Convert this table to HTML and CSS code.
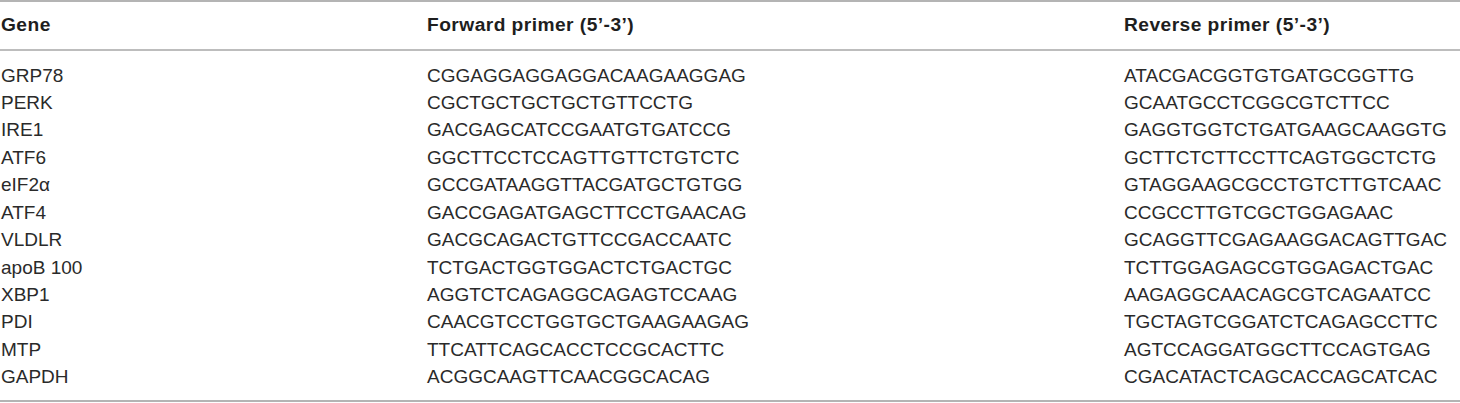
FILE: index.html
```html
<!DOCTYPE html>
<html>
<head>
<meta charset="utf-8">
<link rel="stylesheet" href="styles.css">
</head>
<body>
<div class="table">
  <div class="head row">
    <div class="c1">Gene</div>
    <div class="c2">Forward primer (5’-3’)</div>
    <div class="c3">Reverse primer (5’-3’)</div>
  </div>
  <div class="body">
    <div class="row"><div class="c1">GRP78</div><div class="c2">CGGAGGAGGAGGACAAGAAGGAG</div><div class="c3">ATACGACGGTGTGATGCGGTTG</div></div>
    <div class="row"><div class="c1">PERK</div><div class="c2">CGCTGCTGCTGCTGTTCCTG</div><div class="c3">GCAATGCCTCGGCGTCTTCC</div></div>
    <div class="row"><div class="c1">IRE1</div><div class="c2">GACGAGCATCCGAATGTGATCCG</div><div class="c3">GAGGTGGTCTGATGAAGCAAGGTG</div></div>
    <div class="row"><div class="c1">ATF6</div><div class="c2">GGCTTCCTCCAGTTGTTCTGTCTC</div><div class="c3">GCTTCTCTTCCTTCAGTGGCTCTG</div></div>
    <div class="row"><div class="c1">eIF2α</div><div class="c2">GCCGATAAGGTTACGATGCTGTGG</div><div class="c3">GTAGGAAGCGCCTGTCTTGTCAAC</div></div>
    <div class="row"><div class="c1">ATF4</div><div class="c2">GACCGAGATGAGCTTCCTGAACAG</div><div class="c3">CCGCCTTGTCGCTGGAGAAC</div></div>
    <div class="row"><div class="c1">VLDLR</div><div class="c2">GACGCAGACTGTTCCGACCAATC</div><div class="c3">GCAGGTTCGAGAAGGACAGTTGAC</div></div>
    <div class="row"><div class="c1">apoB 100</div><div class="c2">TCTGACTGGTGGACTCTGACTGC</div><div class="c3">TCTTGGAGAGCGTGGAGACTGAC</div></div>
    <div class="row"><div class="c1">XBP1</div><div class="c2">AGGTCTCAGAGGCAGAGTCCAAG</div><div class="c3">AAGAGGCAACAGCGTCAGAATCC</div></div>
    <div class="row"><div class="c1">PDI</div><div class="c2">CAACGTCCTGGTGCTGAAGAAGAG</div><div class="c3">TGCTAGTCGGATCTCAGAGCCTTC</div></div>
    <div class="row"><div class="c1">MTP</div><div class="c2">TTCATTCAGCACCTCCGCACTTC</div><div class="c3">AGTCCAGGATGGCTTCCAGTGAG</div></div>
    <div class="row"><div class="c1">GAPDH</div><div class="c2">ACGGCAAGTTCAACGGCACAG</div><div class="c3">CGACATACTCAGCACCAGCATCAC</div></div>
  </div>
</div>
</body>
</html>
```
FILE: styles.css
```css
html, body {
  margin: 0;
  padding: 0;
  background: #ffffff;
}
.table {
  width: 1460px;
  font-family: "Liberation Sans", Arial, sans-serif;
  color: #2a2a2a;
  border-top: 2px solid #b4b4b4;
  border-bottom: 2px solid #b4b4b4;
}
.row {
  display: grid;
  grid-template-columns: 427px 697px 1fr;
  font-size: 19px;
  line-height: 27.4px;
}
.c1 {
  padding-left: 1px;
}
.head {
  font-weight: bold;
  font-size: 19.2px;
  letter-spacing: 0.45px;
  line-height: 22px;
  padding: 12.2px 0 12.8px;
  border-bottom: 2px solid #bdbdbd;
  color: #1e1e1e;
}
.body {
  padding: 10.7px 0 9.5px;
}
```
